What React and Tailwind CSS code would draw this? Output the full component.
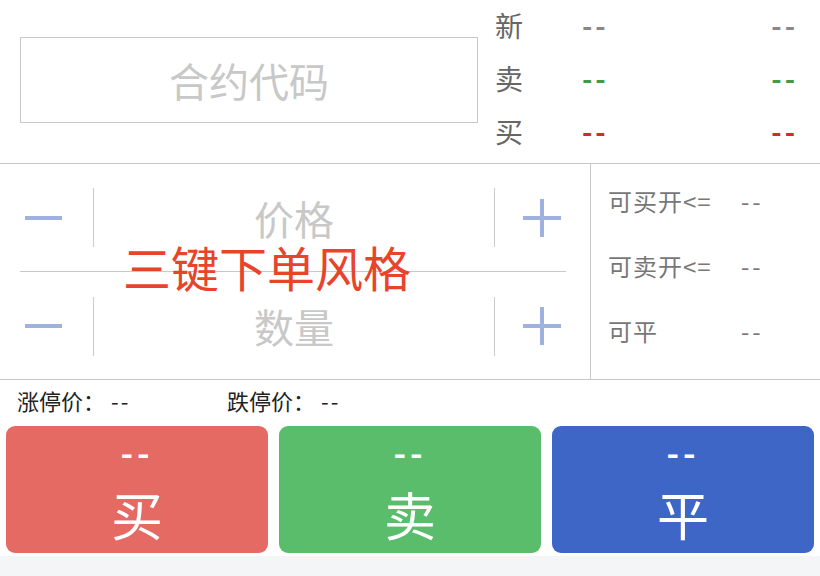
import React from "react";

const font = { fontFamily: '"Noto Sans CJK SC", "Noto Sans", sans-serif' };

const Minus = () => <div className="w-[37px] h-[4px] bg-[#9fb2df]" />;

const Plus = () => (
  <div className="relative w-[38px] h-[38px]">
    <div className="absolute left-0 top-[17px] w-[38px] h-[4px] bg-[#9fb2df]" />
    <div className="absolute top-0 left-[17px] w-[4px] h-[38px] bg-[#9fb2df]" />
  </div>
);

const StepRow = ({ label, border }) => (
  <div className={`flex items-center h-[108px] ml-[20px] mr-[24px] ${border ? "border-b border-[#c8c8c8]" : ""}`}>
    <div className="w-[73px] flex items-center pl-[5px]">
      <Minus />
    </div>
    <div className="w-px h-[59px] bg-[#cccccc]" />
    <div className="flex-1 text-center text-[40px] text-[#c8c8c8] leading-none">{label}</div>
    <div className="w-px h-[59px] bg-[#cccccc]" />
    <div className="w-[71px] flex items-center pl-[28px]">
      <Plus />
    </div>
  </div>
);

const QuoteRow = ({ label, color }) => (
  <div className="flex items-center h-[53px]">
    <span className="w-[87px] text-[28px] text-[#666666] leading-none">{label}</span>
    <span className={`flex-1 text-[28px] font-bold leading-none tracking-[3px] ${color}`}>--</span>
    <span className={`text-[28px] font-bold leading-none tracking-[3px] ${color}`}>--</span>
  </div>
);

const AvailRow = ({ label }) => (
  <div className="flex items-center h-[65px] pl-[17px] text-[24px] text-[#777777] leading-none">
    <span className="w-[133px] tracking-[1px]">{label}</span>
    <span className="tracking-[3px]">--</span>
  </div>
);

const OrderButton = ({ label, bg }) => (
  <div className={`h-[127px] rounded-[9px] ${bg} flex flex-col items-center text-white`}>
    <div className="mt-[9px] h-[36px] text-[34px] font-bold leading-none tracking-[4px]">--</div>
    <div className="mt-[17px] text-[52px] leading-none">{label}</div>
  </div>
);

export default function App() {
  return (
    <div className="w-[820px] h-[576px] bg-[#f4f5f7] overflow-hidden" style={font}>
      <div className="bg-white">
        {/* contract + quotes */}
        <div className="flex h-[164px] border-b border-[#c8c8c8]">
          <div className="pl-[20px] pt-[37px]">
            <div className="w-[458px] h-[86px] border border-[#c8c8c8] flex items-center justify-center text-[40px] text-[#c8c8c8]">
              合约代码
            </div>
          </div>
          <div className="flex-1 pl-[17px] pr-[22px] -mt-[2px]">
            <QuoteRow label="新" color="text-[#888888]" />
            <QuoteRow label="卖" color="text-[#3f9b46]" />
            <QuoteRow label="买" color="text-[#e02424]" />
          </div>
        </div>

        {/* price / volume */}
        <div className="flex h-[216px] border-b border-[#c8c8c8]">
          <div className="relative w-[591px] border-r border-[#c8c8c8]">
            <StepRow label="价格" border />
            <StepRow label="数量" />
            <div className="absolute left-[123px] top-[78px] text-[48px] leading-none text-[#e8432b]">
              三键下单风格
            </div>
          </div>
          <div className="flex-1 pt-[4px]">
            <AvailRow label="可买开<=" />
            <AvailRow label="可卖开<=" />
            <AvailRow label="可平" />
          </div>
        </div>

        {/* limits */}
        <div className="flex items-center h-[46px] pb-[6px] pl-[17px] text-[22px] text-[#222222] leading-none">
          <span className="w-[210px]">涨停价：<span className="ml-[6px] tracking-[2px]">--</span></span>
          <span>跌停价：<span className="ml-[6px] tracking-[2px]">--</span></span>
        </div>

        {/* order buttons */}
        <div className="grid grid-cols-3 gap-[11px] px-[6px] pb-[3px]">
          <OrderButton label="买" bg="bg-[#e66a64]" />
          <OrderButton label="卖" bg="bg-[#5abd6c]" />
          <OrderButton label="平" bg="bg-[#3e66c6]" />
        </div>
      </div>
    </div>
  );
}
